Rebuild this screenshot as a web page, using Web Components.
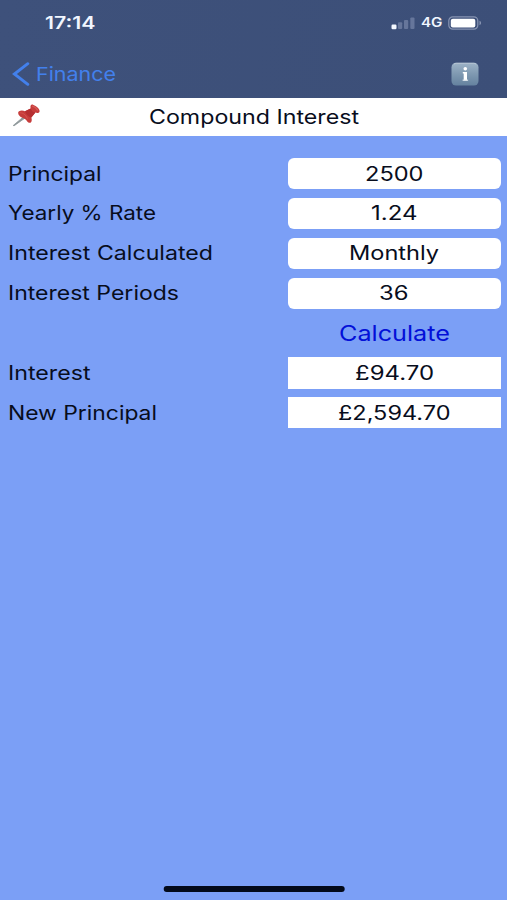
<!DOCTYPE html>
<html lang="en">
<head>
<meta charset="utf-8">
<title>Compound Interest</title>
<style>
    body {
        margin: 0;
        background: #7b9ff6;
        font-family: Inter, "Liberation Sans", sans-serif;
    }
</style>
</head>
<body>
<finance-app>
    <status-bar slot="header" time="17:14" network="4G"></status-bar>
    <nav-bar slot="header" back="Finance"></nav-bar>
    <title-bar slot="title"><wide-text width="210">Compound Interest</wide-text></title-bar>

    <form-row label="Principal" label-width="93.5"><value-box><wide-text width="58.5">2500</wide-text></value-box></form-row>
    <form-row label="Yearly % Rate" label-width="148"><value-box><wide-text width="46.5">1.24</wide-text></value-box></form-row>
    <form-row label="Interest Calculated" label-width="205"><value-box><wide-text width="90">Monthly</wide-text></value-box></form-row>
    <form-row label="Interest Periods" label-width="171"><value-box><wide-text width="29.5">36</wide-text></value-box></form-row>
    <form-row><calc-button><wide-text width="111">Calculate</wide-text></calc-button></form-row>
    <form-row label="Interest" label-width="82.5"><value-box readonly><wide-text width="79">£94.70</wide-text></value-box></form-row>
    <form-row label="New Principal" label-width="149"><value-box readonly><wide-text width="112.5">£2,594.70</wide-text></value-box></form-row>
</finance-app>

<script>
function attachTemplate(element, html) {
    const template = document.createElement("template");
    template.innerHTML = html;
    const shadow = element.attachShadow({ mode: "open" });
    shadow.appendChild(template.content.cloneNode(true));
    return shadow;
}

// Text stretched horizontally to a given width
class WideText extends HTMLElement {
    constructor() {
        super();
        this.span = attachTemplate(this, `
            <style>
                :host {
                    display: inline-block;
                    white-space: nowrap;
                    line-height: 24px;
                }

                span {
                    display: inline-block;
                    transform-origin: 0 50%;
                }
            </style>
            <span><slot></slot></span>
        `).querySelector("span");
    }

    connectedCallback() {
        const width = Number(this.getAttribute("width"));
        const natural = this.span.getBoundingClientRect().width;
        this.span.style.transform = `translateY(0.3px) scaleX(${width / natural})`;
        this.style.width = width + "px";
    }
}

class FinanceApp extends HTMLElement {
    constructor() {
        super();
        attachTemplate(this, `
            <style>
                :host {
                    display: flex;
                    flex-direction: column;
                    height: 900px;
                    overflow: hidden;
                    font-size: 19.5px;
                    color: #080d1c;
                    background: #7b9ff6;
                }

                header {
                    height: 98px;
                    background: linear-gradient(100deg, #3e517b, #3c4f78);
                }

                main {
                    flex: 1;
                    display: grid;
                    grid-auto-rows: 31.3px;
                    align-content: start;
                    row-gap: 8.55px;
                    padding: 22px 6.4px 0 7.7px;
                }

                .home {
                    width: 181px;
                    height: 6px;
                    margin: 0 auto 8.5px;
                    border-radius: 3px;
                    background: #030a1a;
                    transform: translateX(0.7px);
                }
            </style>
            <header><slot name="header"></slot></header>
            <slot name="title"></slot>
            <main><slot></slot></main>
            <div class="home"></div>
        `);
    }
}

class StatusBar extends HTMLElement {
    constructor() {
        super();
        attachTemplate(this, `
            <style>
                :host {
                    display: flex;
                    align-items: center;
                    height: 46px;
                    padding: 0 25.5px 0 45px;
                    color: #f1f6ff;
                }

                .time {
                    flex: 1;
                    font-size: 17px;
                    font-weight: 600;
                }

                .network {
                    font-size: 12.5px;
                    font-weight: 600;
                    margin: 0 5.5px 0 6px;
                }

                svg {
                    display: block;
                }
            </style>
            <div class="time"><wide-text width="50.5">${this.getAttribute("time")}</wide-text></div>
            <svg width="24" height="14" viewBox="0 0 24 14">
                <rect x="0.5" y="8.5" width="5" height="4.7" rx="1.2" fill="#f4f8ff"/>
                <rect x="7" y="6.3" width="4.2" height="6.7" rx="1" fill="#66769b"/>
                <rect x="13" y="4" width="4.2" height="9" rx="1" fill="#66769b"/>
                <rect x="19.3" y="1.5" width="4.2" height="11.5" rx="1" fill="#66769b"/>
            </svg>
            <div class="network"><wide-text width="21.5">${this.getAttribute("network")}</wide-text></div>
            <svg width="34" height="14" viewBox="0 0 34 14">
                <rect x="0.8" y="0.8" width="29" height="12.4" rx="4" fill="none" stroke="#8794b2" stroke-width="1.2"/>
                <rect x="2.8" y="2.8" width="24.5" height="8.6" rx="2" fill="#fff"/>
                <path d="M31.5 4.8c2.1.7 2.1 3.7 0 4.4z" fill="#8794b2"/>
            </svg>
        `);
    }
}

class NavBar extends HTMLElement {
    constructor() {
        super();
        attachTemplate(this, `
            <style>
                :host {
                    display: flex;
                    align-items: center;
                    height: 56px;
                    padding: 0 28.5px 0 12px;
                    color: #4380ec;
                }

                .back {
                    flex: 1;
                    display: flex;
                    align-items: center;
                    gap: 5.8px;
                    font-size: 19px;
                }

                wide-text {
                    padding-top: 1px;
                }

                svg {
                    display: block;
                }
            </style>
            <div class="back">
                <svg width="18" height="24" viewBox="0 0 18 24">
                    <path d="M15.8 1.7 2.4 12 15.8 22.3" fill="none" stroke="currentColor" stroke-width="2.9" stroke-linecap="round" stroke-linejoin="miter"/>
                </svg>
                <wide-text width="80">${this.getAttribute("back")}</wide-text>
            </div>
            <svg width="28" height="24" viewBox="0 0 28 24">
                <defs>
                    <linearGradient id="info" x1="0" y1="0" x2="0" y2="1">
                        <stop offset="0" stop-color="#9eb3c7"/>
                        <stop offset="0.5" stop-color="#7f99b1"/>
                        <stop offset="1" stop-color="#65829f"/>
                    </linearGradient>
                </defs>
                <rect x="0.5" y="0.7" width="27" height="22.8" rx="4.5" fill="url(#info)"/>
                <path d="M3 2.2Q4 1.3 5.5 1.3h17q1.5 0 2.5.9" fill="none" stroke="#bccad7" stroke-width="0.8"/>
                <circle cx="14.3" cy="6.7" r="1.8" fill="#fff"/>
                <path d="M11.8 10h4.2v8.6h-3.3v-7.1h-.9z" fill="#fff"/>
                <path d="M11.6 17.6h5.5v1.2h-5.5z" fill="#e3eaf0"/>
            </svg>
        `);
    }
}

class TitleBar extends HTMLElement {
    constructor() {
        super();
        attachTemplate(this, `
            <style>
                :host {
                    display: grid;
                    grid-template-columns: 40px 1fr 40px;
                    align-items: center;
                    justify-items: center;
                    height: 38px;
                    background: #fff;
                }

                svg {
                    justify-self: end;
                    margin: 0 0.5px 5px 0;
                }
            </style>
            <svg width="29" height="24" viewBox="0 0 29 24">
                <path d="M13.2 13.2 2.2 22.5l1 .2L14.8 14.5z" fill="#8c9698" stroke="#8c9698" stroke-width="0.8" stroke-linejoin="round"/>
                <path d="M7.2 10.2c-.6-3 4.5-3.4 6.8-2l5.6-2.8c-.6-2.8.6-4.6 2.8-3.5 3 1.1 6 3.6 6.2 6 0 2.1-2.2 2.3-4.2 1.7l-4.1 4.8c1.1 2.7.3 6.2-2.5 5.3-2-1.3-2.9-3.8-4.7-4.3-2.4-1-5.3-1.8-5.9-5.2z" fill="#c63c3b"/>
                <path d="M19.6 5.4c.8 2.3 2.6 4 4.8 4.2l-4.1 4.8c-2.8-.7-5.3-3-6.3-6.2z" fill="#b52e31"/>
                <path d="M21.5 3.2c1.7.4 4 2 5 3.9" fill="none" stroke="#d65a56" stroke-width="1.2" stroke-linecap="round"/>
                <path d="M9 9.8c2.5-.4 5.5 1.5 7.3 5.6" fill="none" stroke="#d4524f" stroke-width="1" stroke-linecap="round"/>
            </svg>
            <slot></slot>
        `);
    }
}

class FormRow extends HTMLElement {
    constructor() {
        super();
        const label = this.getAttribute("label");
        attachTemplate(this, `
            <style>
                :host {
                    display: grid;
                    grid-template-columns: 1fr 213px;
                    align-items: center;
                }

                .label {
                    height: 24px;
                }
            </style>
            <div class="label">${label ? `<wide-text width="${this.getAttribute("label-width")}">${label}</wide-text>` : ""}</div>
            <slot></slot>
        `);
    }
}

class ValueBox extends HTMLElement {
    constructor() {
        super();
        attachTemplate(this, `
            <style>
                :host {
                    display: flex;
                    align-items: center;
                    justify-content: center;
                    height: 31.3px;
                    border-radius: 6px;
                    background: #fff;
                }

                :host([readonly]) {
                    border-radius: 0;
                }
            </style>
            <slot></slot>
        `);
    }
}

class CalcButton extends HTMLElement {
    constructor() {
        super();
        attachTemplate(this, `
            <style>
                :host {
                    display: flex;
                    align-items: center;
                    justify-content: center;
                    font-size: 21.5px;
                    color: #0310d8;
                }
            </style>
            <slot></slot>
        `);
    }
}

customElements.define("finance-app", FinanceApp);
customElements.define("status-bar", StatusBar);
customElements.define("nav-bar", NavBar);
customElements.define("title-bar", TitleBar);
customElements.define("form-row", FormRow);
customElements.define("value-box", ValueBox);
customElements.define("calc-button", CalcButton);
customElements.define("wide-text", WideText);
</script>
</body>
</html>
